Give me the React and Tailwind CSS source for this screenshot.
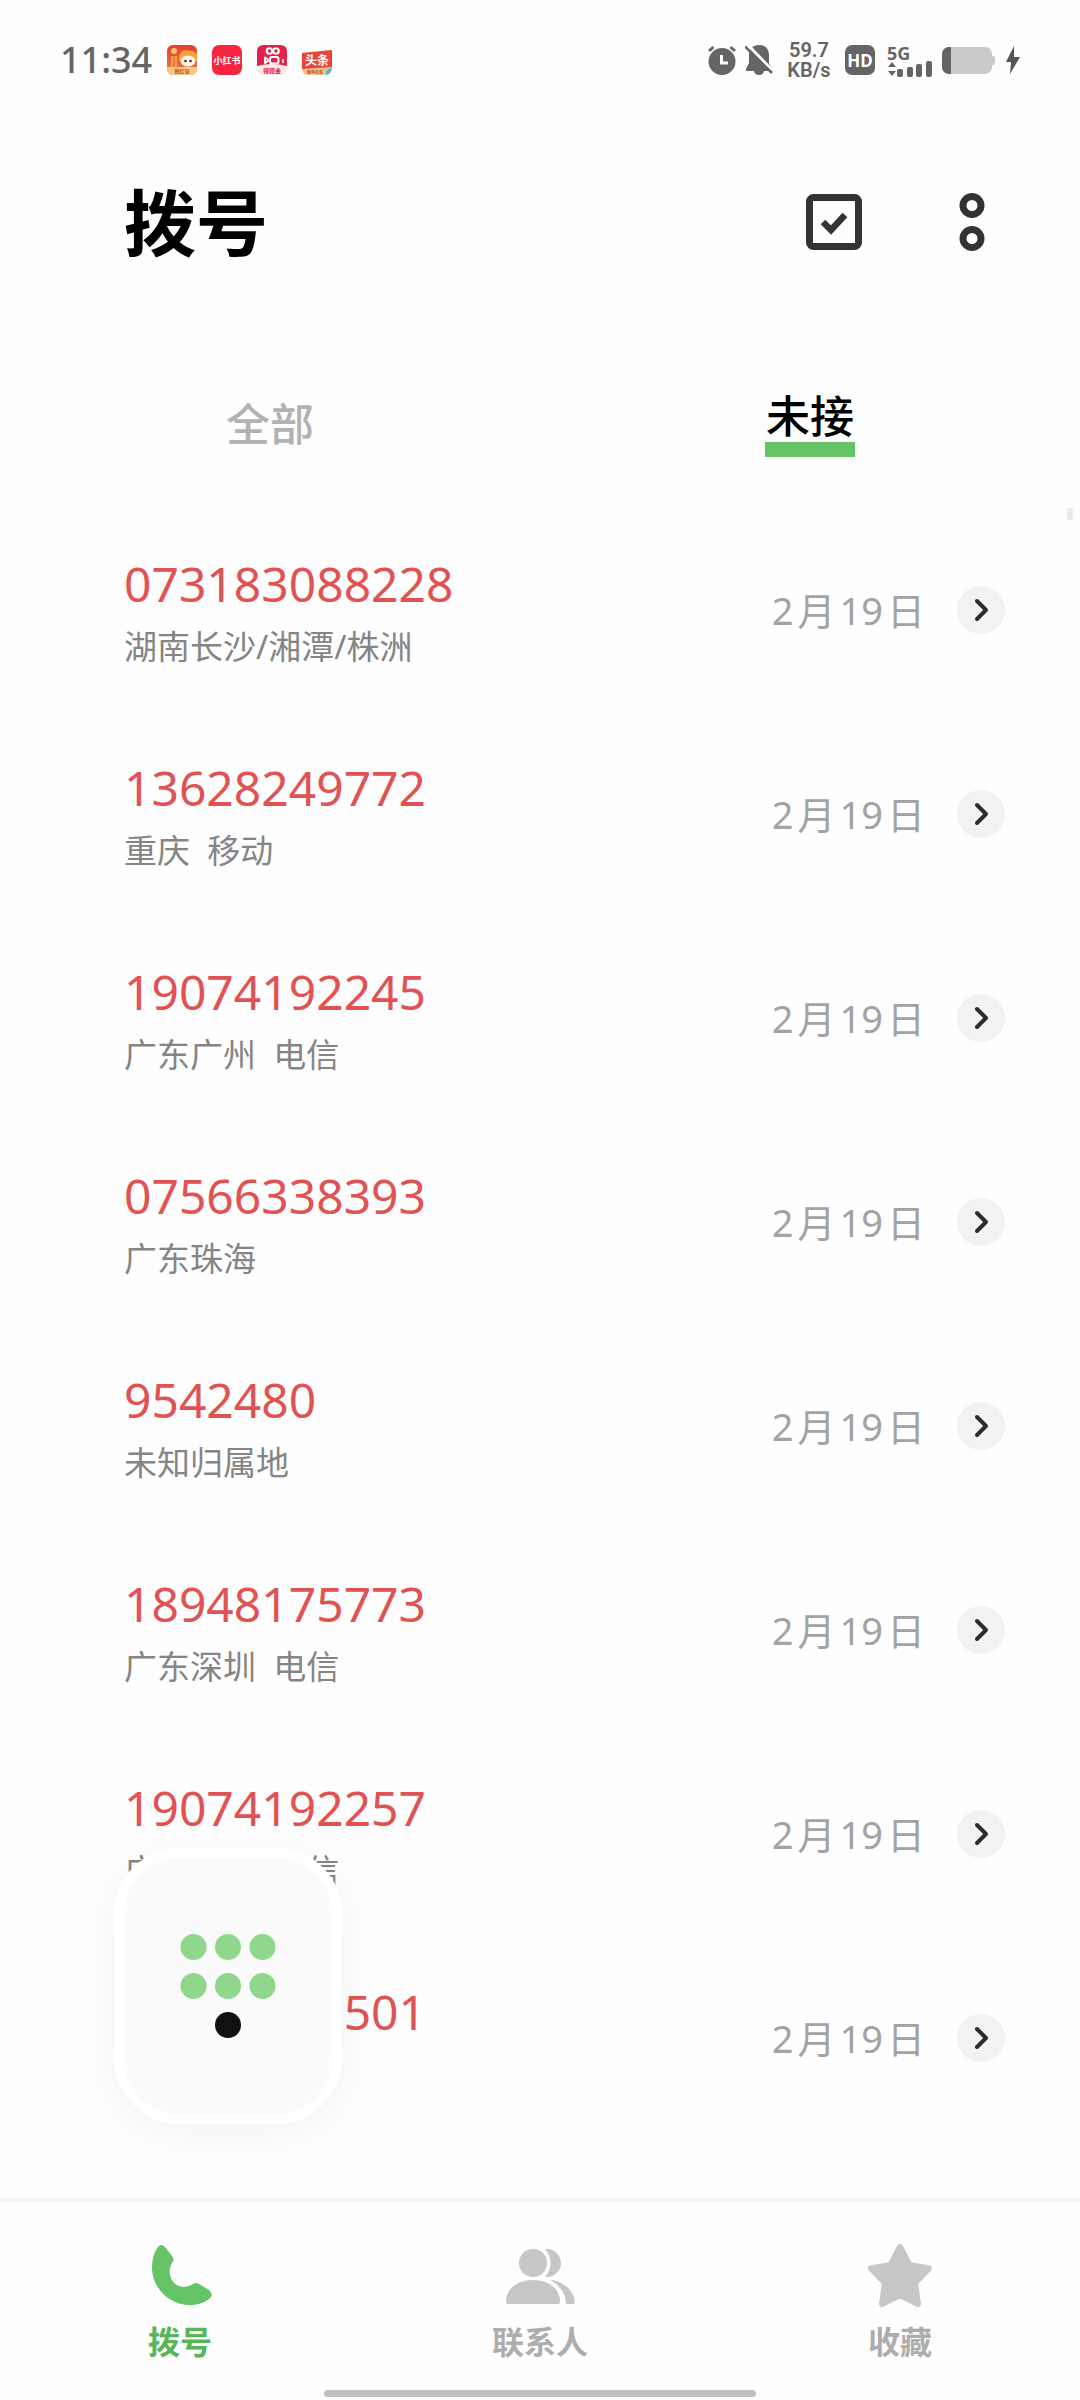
const calls = [
  { number: '073183088228', place: '湖南长沙/湘潭/株洲' },
  { number: '13628249772', place: '重庆  移动' },
  { number: '19074192245', place: '广东广州  电信' },
  { number: '07566338393', place: '广东珠海' },
  { number: '9542480', place: '未知归属地' },
  { number: '18948175773', place: '广东深圳  电信' },
  { number: '19074192257', place: '广东深圳  电信' },
  { number: '19074192501', place: '广东广州' },
];

function PromoIcon() {
  return (
    <svg className="size-[30px]" viewBox="0 0 30 30" aria-hidden="true">
      <defs>
        <linearGradient id="promo" x1="0" y1="0" x2="0" y2="1">
          <stop offset="0" stopColor="#e2402f" />
          <stop offset="1" stopColor="#f0803f" />
        </linearGradient>
        <clipPath id="promoClip"><rect width="30" height="30" rx="6" /></clipPath>
      </defs>
      <g clipPath="url(#promoClip)">
        <rect width="30" height="30" fill="url(#promo)" />
        <circle cx="7" cy="6" r="3" fill="#ffc56b" />
        <path d="M4 11h6v11H4z" fill="#f5a04c" />
        <path d="M7 9v13" stroke="#e0532f" strokeWidth="1" />
        <path d="M12 12c1-5 5-8 10-6 4-1 7 2 8 4v6H12z" fill="#f9a23c" />
        <ellipse cx="21" cy="16" rx="7.500" ry="5.500" fill="#fff3e8" />
        <circle cx="18.500" cy="16" r="1.300" fill="#333" />
        <circle cx="23.500" cy="16" r="1.300" fill="#333" />
        <rect y="22" width="30" height="8" fill="#fbc888" />
      </g>
      <text x="15" y="28" textAnchor="middle" fontSize="5" fontWeight="700" fill="#a8461f">抢红包</text>
    </svg>
  );
}

function RedBookIcon() {
  return (
    <svg className="size-[30px]" viewBox="0 0 30 30" aria-hidden="true">
      <rect width="30" height="30" rx="7" fill="#f9243f" />
      <text x="15" y="19" textAnchor="middle" fontSize="9" fontWeight="700" fill="#fff">小红书</text>
    </svg>
  );
}

function VideoIcon() {
  return (
    <svg className="size-[30px]" viewBox="0 0 30 30" aria-hidden="true">
      <path d="M6 0h18a6 6 0 0 1 6 6v15H0V6a6 6 0 0 1 6-6z" fill="#e0234a" />
      <path d="M0 21q15-4 30 0v3a6 6 0 0 1-6 6H6a6 6 0 0 1-6-6z" fill="#fbe9e4" />
      <g fill="none" stroke="#fff" strokeWidth="2">
        <circle cx="12.500" cy="6" r="2.800" />
        <circle cx="19" cy="6" r="2.800" />
        <rect x="13" y="12" width="8.500" height="6.500" rx="2" />
        <path d="M8 12.500v5.500l4-2.700z" strokeLinejoin="round" />
      </g>
      <path d="M26 14v4" stroke="#fff" strokeWidth="1.500" />
      <text x="15" y="27.500" textAnchor="middle" fontSize="6" fontWeight="700" fill="#d92542">领现金</text>
    </svg>
  );
}

function NewsIcon() {
  return (
    <svg className="size-[30px]" viewBox="0 0 30 30" aria-hidden="true">
      <path d="M0 8l30-3v19a6 6 0 0 1-6 6H6a6 6 0 0 1-6-6z" fill="#f6c089" />
      <path d="M0 8l30-3v17L0 24z" fill="#e9433b" />
      <text x="15" y="19.500" textAnchor="middle" fontSize="12" fontWeight="700" fill="#fff">头条</text>
      <text x="13" y="28.500" textAnchor="middle" fontSize="4" fontWeight="700" fill="#b0562d">新年红包</text>
      <path d="M24 30c-1-4 2-7 6-7-1 3-2 6-6 7z" fill="#3cc4c4" />
    </svg>
  );
}

function AlarmIcon() {
  return (
    <svg className="h-[30px] w-[30px]" viewBox="0 0 30 30" fill="none" aria-hidden="true">
      <circle cx="15" cy="16.500" r="13.500" fill="#656565" />
      <path d="M2 6l4.500-4M28 6l-4.500-4" stroke="#656565" strokeWidth="3" />
      <path d="M14.500 10v8h6.500" stroke="#fff" strokeWidth="3" />
    </svg>
  );
}

function MutedIcon() {
  return (
    <svg className="h-[30px] w-[28px]" viewBox="0 0 28 30" aria-hidden="true">
      <path d="M14 0c6 0 10 4 10 10v8l3 6v2h-8c0 2-2 4-5 4s-5-2-5-4H1v-2l3-6v-8C4 4 8 0 14 0z" fill="#656565" />
      <path d="M3 0l25 26" stroke="#fff" strokeWidth="3" />
      <path d="M0 1.500l27 26.500" stroke="#656565" strokeWidth="2.500" />
    </svg>
  );
}

function SignalIcon() {
  return (
    <svg className="h-[40px] w-[45px]" viewBox="0 -6 45 40" fill="#656565" aria-label="5G">
      <text x="0" y="14" fontSize="18" fontWeight="700">5G</text>
      <path d="M1 21l4-5 4 5zM1 25l4 5 4-5z" />
      <rect x="10" y="23" width="6" height="8" rx="2" />
      <rect x="20" y="21" width="6" height="10" rx="2" />
      <rect x="29" y="18" width="6" height="13" rx="2" />
      <rect x="39" y="15" width="6" height="16" rx="2" />
    </svg>
  );
}

function BatteryIcon() {
  return (
    <svg className="h-[27px] w-[54px]" viewBox="0 0 54 27" aria-hidden="true">
      <rect width="50" height="27" rx="7" fill="#cacaca" />
      <path d="M50 9h1a2 2 0 0 1 2 2v5a2 2 0 0 1-2 2h-1z" fill="#cacaca" />
      <path d="M9 0H7a7 7 0 0 0-7 7v13a7 7 0 0 0 7 7h2z" fill="#656565" />
    </svg>
  );
}

function StatusBar() {
  return (
    <div className="flex h-[120px] items-center justify-between px-[60px] text-[#656565]">
      <div className="flex items-center gap-[15px]">
        <span className="text-[36px] leading-[40px] font-medium">11:34</span>
        <PromoIcon />
        <RedBookIcon />
        <VideoIcon />
        <NewsIcon />
      </div>
      <div className="flex items-center">
        <AlarmIcon />
        <span className="ml-2"><MutedIcon /></span>
        <span className="ml-3 flex w-[48px] flex-col items-center font-['Roboto',sans-serif] text-[20px] leading-[20px] font-semibold">
          <span>59.7</span>
          <span>KB/s</span>
        </span>
        <span className="ml-3 flex size-[30px] items-center justify-center rounded-[7px] bg-[#656565] text-[17px] leading-none font-bold text-white">HD</span>
        <span className="ml-3"><SignalIcon /></span>
        <span className="ml-[10px]"><BatteryIcon /></span>
        <svg className="ml-[10px] h-[28px] w-[14px]" viewBox="0 0 14 28" fill="#555" aria-hidden="true">
          <path d="M8 0L0 16h5l-1 12L14 11H8z" />
        </svg>
      </div>
    </div>
  );
}

function Header() {
  return (
    <header className="flex h-[204px] items-center justify-between pr-[95px] pl-[124px]">
      <h1 className="text-[72px] leading-[80px] font-bold text-black">拨号</h1>
      <div className="flex items-center gap-[97px]">
        <button type="button" aria-label="多选">
          <svg className="size-[56px]" viewBox="0 0 56 56" fill="none" stroke="#333">
            <rect x="3.500" y="3.500" width="49" height="49" rx="4" strokeWidth="7" />
            <path d="M17 28l8 8 14-15" strokeWidth="6.500" />
          </svg>
        </button>
        <button type="button" aria-label="更多">
          <svg className="h-[58px] w-[26px]" viewBox="0 0 26 58" fill="none" stroke="#333" strokeWidth="7">
            <circle cx="13" cy="12.500" r="9" />
            <circle cx="13" cy="45.500" r="9" />
          </svg>
        </button>
      </div>
    </header>
  );
}

function Tabs() {
  return (
    <div role="tablist" className="grid h-[184px] grid-cols-2 items-center justify-items-center pt-4 text-[44px] leading-[48px] font-medium">
      <button type="button" role="tab" aria-selected="false" className="text-[#b2b2b2]">全部</button>
      <button type="button" role="tab" aria-selected="true" className="flex flex-col items-center text-black">
        未接
        <span className="mt-[2px] h-[15px] w-[90px] bg-[#64c466]" />
      </button>
    </div>
  );
}

function CallRow({ number, place }) {
  return (
    <li className="flex h-[204px] items-center justify-between pr-[75px] pl-[124px]">
      <div className="pt-[14px]">
        <p className="text-[48px] leading-[60px] text-[#e15253]">{number}</p>
        <p className="text-[33px] leading-[66px] whitespace-pre text-[#858585]">{place}</p>
      </div>
      <div className="flex items-center gap-8">
        <span className="text-[38px] leading-[48px] text-[#a3a3a3]">
          2<span className="mx-1">月</span>19<span className="ml-1">日</span>
        </span>
        <button type="button" aria-label={`${number} 详情`} className="flex size-[48px] items-center justify-center rounded-full bg-[#f2f2f2]">
          <svg className="h-[24px] w-[16px]" viewBox="0 0 16 24" fill="none" stroke="#2d2d2d" strokeWidth="4" strokeLinecap="round" strokeLinejoin="round">
            <path d="M4 3l9 9-9 9" />
          </svg>
        </button>
      </div>
    </li>
  );
}

function DialPadButton() {
  return (
    <button type="button" aria-label="拨号键盘" className="absolute bottom-[74px] left-[114px] flex h-[276px] w-[228px] items-center justify-center rounded-[66px] border-[10px] border-white bg-[#fafafa] shadow-[0_8px_40px_rgba(0,0,0,0.05)]">
      <svg className="h-[104px] w-[96px]" viewBox="0 0 96 104" fill="#8ed78c">
        <circle cx="13.500" cy="13" r="13" />
        <circle cx="48" cy="13" r="13" />
        <circle cx="82.500" cy="13" r="13" />
        <circle cx="13.500" cy="52" r="13" />
        <circle cx="48" cy="52" r="13" />
        <circle cx="82.500" cy="52" r="13" />
        <circle cx="48" cy="91" r="13" fill="#111" />
      </svg>
    </button>
  );
}

function BottomNav() {
  return (
    <nav className="border-t-4 border-[#f3f3f3]">
      <div className="grid grid-cols-3 pt-[40px] text-[32px] leading-[40px] font-bold text-[#adadad]">
        <a href="#dial" aria-current="page" className="flex flex-col items-center gap-[14px] text-[#58b558]">
          <svg className="h-[66px] w-[66px]" viewBox="0 0 66 66" fill="#64c466" aria-hidden="true">
            <path d="M11 5q3-4 7 0l7 9q3 4 0 7c-6 10 0 24 12 24q5 0 9-3 3-2 6 0l10 6q4 3 2 7C59 61 50 63 43 63 22 63 5 46 5 25 5 18 7 10 11 5z" />
          </svg>
          拨号
        </a>
        <a href="#contacts" className="flex flex-col items-center gap-[14px]">
          <svg className="h-[66px] w-[70px]" viewBox="0 0 70 66" fill="#c6c6c6" aria-hidden="true">
            <circle cx="28" cy="21" r="14" />
            <path d="M1 60c0-14 12-22 27-22s27 8 27 22q0 2-2 2H3q-2 0-2-2z" />
            <path d="M40 7c9-1 16 6 16 14s-7 15-16 14c7-7 8-19 0-28zM45 38c14 1 24 11 25 22q0 2-2 2h-7c0-10-6-19-16-24z" />
          </svg>
          联系人
        </a>
        <a href="#favorites" className="flex flex-col items-center gap-[14px]">
          <svg className="h-[66px] w-[66px]" viewBox="0 0 66 66" fill="#c6c6c6" stroke="#c6c6c6" strokeWidth="6" strokeLinejoin="round" aria-hidden="true">
            <path d="M33 5l9.500 18L62 26.500 48 41l3 21-18-9-18 9 3-21L4 26.500 23.500 23z" />
          </svg>
          收藏
        </a>
      </div>
      <div className="mx-auto mt-[28px] mb-[3px] h-[7px] w-2/5 rounded-full bg-[#c0c0c0]" />
    </nav>
  );
}

export default function App() {
  return (
    <div className="flex min-h-screen flex-col bg-[#fefefe] font-['Noto_Sans','Noto_Sans_CJK_SC',sans-serif]">
      <StatusBar />
      <Header />
      <Tabs />
      <main className="relative flex-1">
        <ul>
          {calls.map((call) => (
            <CallRow key={call.number} {...call} />
          ))}
        </ul>
        <div className="absolute top-0 right-[7px] h-3 w-[6px] rounded-full bg-[#e9e9e9]" />
        <DialPadButton />
      </main>
      <BottomNav />
    </div>
  );
}
